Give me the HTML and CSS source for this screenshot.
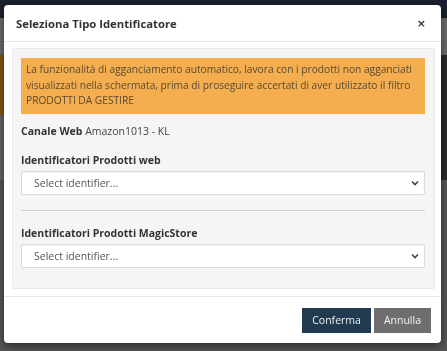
FILE: index.html
```html
<!DOCTYPE html>
<html lang="it">
<head>
  <meta charset="UTF-8">
  <meta name="viewport" content="width=device-width, initial-scale=1.0">
  <title>Seleziona Tipo Identificatore</title>
  <link rel="stylesheet" href="styles.css">
</head>
<body>

  <!-- pagina dietro la modale (oscurata) -->
  <div class="page">
    <div class="topbar"></div>
    <div class="band band-light"></div>
    <div class="band band-orange"></div>
    <div class="band band-dark"></div>
    <div class="band band-mid"></div>
  </div>

  <div class="backdrop"></div>

  <!-- modale -->
  <div class="modal">
    <div class="modal-header">
      <h4 class="modal-title">Seleziona Tipo Identificatore</h4>
      <span class="close">&times;</span>
    </div>

    <div class="modal-body">
      <div class="panel">
        <div class="alert">
          La funzionalità di agganciamento automatico, lavora con i prodotti non agganciati visualizzati nella schermata, prima di proseguire accertati di aver utilizzato il filtro PRODOTTI DA GESTIRE
        </div>

        <p class="channel"><b>Canale Web</b> Amazon1013 - KL</p>

        <label class="field-label" for="id-web">Identificatori Prodotti web</label>
        <div class="select-wrap">
          <select id="id-web" class="form-select">
            <option>Select identifier...</option>
          </select>
          <svg class="chevron" width="8" height="6" viewBox="0 0 8 6"><path d="M1 1.5 L4 4.5 L7 1.5" fill="none" stroke="#444" stroke-width="1.6"/></svg>
        </div>

        <hr class="divider">

        <label class="field-label field-label-after" for="id-magic">Identificatori Prodotti MagicStore</label>
        <div class="select-wrap">
          <select id="id-magic" class="form-select">
            <option>Select identifier...</option>
          </select>
          <svg class="chevron" width="8" height="6" viewBox="0 0 8 6"><path d="M1 1.5 L4 4.5 L7 1.5" fill="none" stroke="#444" stroke-width="1.6"/></svg>
        </div>
      </div>
    </div>

    <div class="modal-footer">
      <button class="btn btn-primary">Conferma</button>
      <button class="btn btn-default">Annulla</button>
    </div>
  </div>

</body>
</html>
```

FILE: styles.css
```css
html, body {
  margin: 0;
  padding: 0;
  height: 100%;
  overflow: hidden;
}

body {
  font-family: "Open Sans", "Liberation Sans", sans-serif;
  font-size: 10px;
  color: #333;
  background: #5c5c5c;
}

/* sfondo della pagina */
.topbar {
  height: 18px;
  background: #1b2230;
}

.band-light {
  height: 37px;
  background: #707070;
}

.band-orange {
  height: 60px;
  background: linear-gradient(to right, #8a5a12 0, #8a5a12 60%, #2b2b2b 60%);
}

.band-dark {
  height: 65px;
  background: linear-gradient(to right, #6a6a6a 0, #6a6a6a 90%, #2a2a2a 90%);
}

.band-mid {
  height: 171px;
  background: #5a5a5a;
}

.backdrop {
  position: fixed;
  inset: 0;
  background: rgba(0, 0, 0, 0.05);
}

/* modale */
.modal {
  position: fixed;
  top: 5px;
  left: 4px;
  width: 437px;
  background: #fff;
  border-radius: 4px;
  box-shadow: 0 3px 9px rgba(0, 0, 0, 0.5);
}

.modal-header {
  display: flex;
  align-items: center;
  justify-content: space-between;
  height: 36px;
  padding: 0 12px 0 12px;
  border-bottom: 1px solid #e8e8e8;
}

.modal-title {
  margin: 0;
  font-size: 11.3px;
  font-weight: 700;
  color: #333;
}

.close {
  font-family: "DejaVu Sans", sans-serif;
  font-size: 11px;
  font-weight: 700;
  color: #333;
  line-height: 1;
  margin-right: 3px;
}

.modal-body {
  padding: 6px 6px 7px 8px;
}

.panel {
  background: #f5f5f5;
  border: 1px solid #e9e9e9;
  border-radius: 2px;
  padding: 9px 9px 20px 8px;
}

.alert {
  background: #f4ad4f;
  color: #5b4a2e;
  font-size: 10.2px;
  line-height: 15.5px;
  padding: 4px 6px 5px 5px;
}

.channel {
  margin: 9px 0 0;
  color: #444;
  font-size: 10.5px;
  line-height: 16px;
}

.channel b {
  font-weight: 700;
  color: #333;
}

.field-label {
  display: block;
  margin-top: 14px;
  font-size: 10.5px;
  font-weight: 700;
  color: #333;
  line-height: 15px;
}

.field-label-after {
  margin-top: 15px;
}

.select-wrap {
  position: relative;
  margin-top: 3px;
}

.form-select {
  -webkit-appearance: none;
  appearance: none;
  display: block;
  width: 100%;
  height: 24px;
  padding: 0 12px;
  border: 1px solid #d9d9d9;
  border-radius: 2px;
  background: #fff;
  font-family: "Open Sans", "Liberation Sans", sans-serif;
  font-size: 10.5px;
  color: #555;
  box-shadow: inset 0 1px 1px rgba(0, 0, 0, 0.04);
}

.chevron {
  position: absolute;
  right: 6px;
  top: 9px;
}

.divider {
  margin: 15px 0 0;
  border: 0;
  border-top: 1px solid #cfcfcf;
}

.modal-footer {
  display: flex;
  justify-content: flex-end;
  gap: 3px;
  padding: 11px 10px 10px;
  border-top: 1px solid #e8e8e8;
}

.btn {
  height: 25px;
  padding: 0 10px;
  border: none;
  border-radius: 0;
  font-family: "Open Sans", "Liberation Sans", sans-serif;
  font-size: 10.5px;
  color: #f2f2f2;
  cursor: pointer;
}

.btn-primary {
  background: #213a50;
}

.btn-default {
  background: #6e6e6e;
}
```
